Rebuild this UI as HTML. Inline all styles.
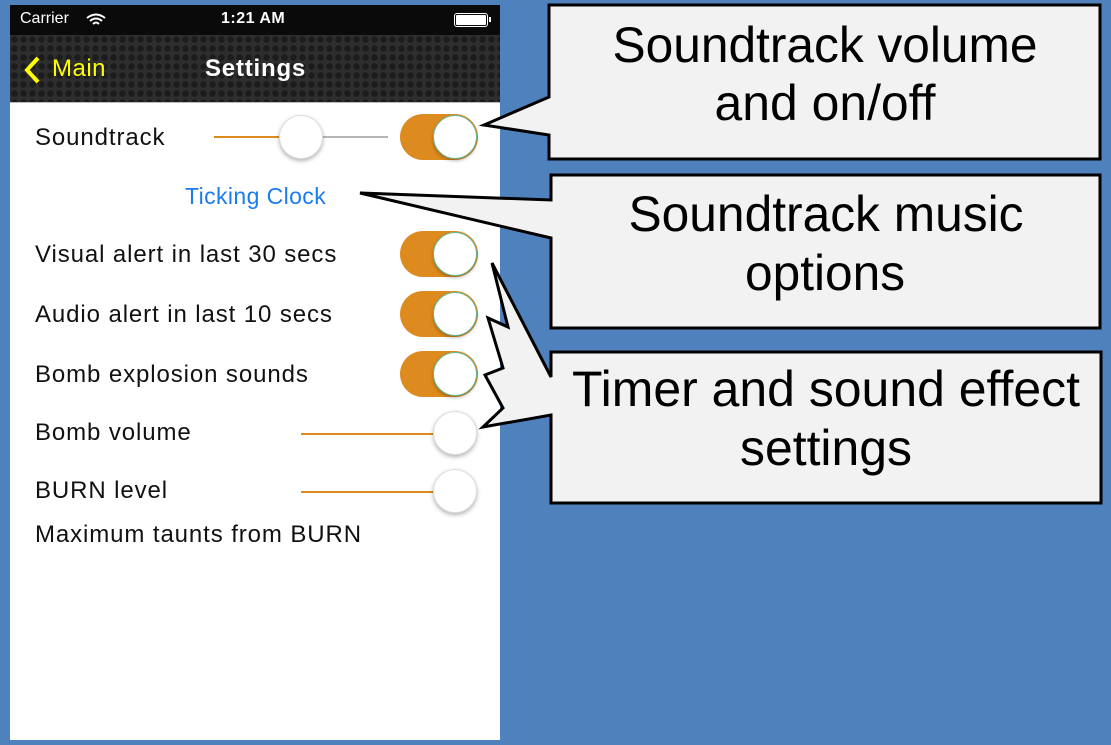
<!DOCTYPE html>
<html><head><meta charset="utf-8"><style>
body{margin:0;width:1111px;height:745px;background:#4f81bd;position:relative;overflow:hidden;font-family:"Liberation Sans",sans-serif}
.ph{position:absolute;left:10px;top:5px;width:490px;height:735px;background:#fff}
.sb{position:absolute;left:0;top:0;width:490px;height:30px;background:#0a0a0a;color:#fff;font-size:16px}
.nav{position:absolute;left:0;top:30px;width:490px;height:67px;background-color:#2e2e2e;background-image:radial-gradient(circle,#1c1c1c 3px,transparent 3.5px);background-size:9px 9px;border-bottom:1px solid #bbb}
.a{position:absolute;white-space:nowrap}
.lbl{position:absolute;left:25px;font-size:24px;letter-spacing:0.9px;color:#111;white-space:nowrap}
.tg{position:absolute;left:390px;width:78px;height:46px;border-radius:23px;background:#dd8a1e}
.tg::after{content:"";position:absolute;right:1px;top:1px;width:42px;height:42px;border-radius:50%;background:#fff;border:1px solid #6b9;box-shadow:0 2px 3px rgba(0,0,0,.25)}
.th{position:absolute;width:42px;height:42px;border-radius:50%;background:#fff;box-shadow:0 2px 4px rgba(0,0,0,.3);border:1px solid #ddd}
.tr{position:absolute;height:2px}
</style></head><body>
<div class="ph">
 <div class="sb"><span class="a" style="left:10px;top:5px">Carrier</span>
  <svg class="a" style="left:76px;top:8px" width="20" height="14" viewBox="0 0 20 14"><path d="M1 5Q10-2 19 5M4 8Q10 3 16 8M7 11Q10 8 13 11" stroke="#fff" stroke-width="2" fill="none"/></svg>
  <span class="a" style="left:211px;top:5px;font-weight:bold;letter-spacing:0.5px">1:21 AM</span>
  <div class="a" style="left:444px;top:8px;width:32px;height:12px;border:1px solid #fff;border-radius:3px"><div style="margin:1px;height:10px;background:#fff;border-radius:1px"></div></div>
  <div class="a" style="left:479px;top:12px;width:2px;height:5px;background:#fff"></div>
 </div>
 <div class="nav">
  <svg class="a" style="left:12px;top:20px" width="20" height="30"><path d="M16 3L5 15L16 27" stroke="#ff0" stroke-width="4" fill="none"/></svg>
  <span class="a" style="left:42px;top:20px;font-size:24px;color:#ff0;letter-spacing:0.5px">Main</span>
  <span class="a" style="left:195px;top:20px;font-size:24px;color:#fff;font-weight:bold;letter-spacing:0.8px">Settings</span>
 </div>
 <div class="lbl" style="top:119px">Soundtrack</div>
 <div class="tr" style="left:204px;top:131px;width:88px;background:#dd8a1e"></div>
 <div class="tr" style="left:292px;top:131px;width:86px;background:#b5b5b5"></div>
 <div class="th" style="left:269px;top:110px"></div>
 <div class="tg" style="top:109px"></div>
 <div class="a" style="left:175px;top:178px;font-size:23px;letter-spacing:0.4px;color:#1a7cf0">Ticking Clock</div>
 <div class="lbl" style="top:236px">Visual alert in last 30 secs</div><div class="tg" style="top:226px"></div>
 <div class="lbl" style="top:296px">Audio alert in last 10 secs</div><div class="tg" style="top:286px"></div>
 <div class="lbl" style="top:356px">Bomb explosion sounds</div><div class="tg" style="top:346px"></div>
 <div class="lbl" style="top:414px">Bomb volume</div>
 <div class="tr" style="left:291px;top:428px;width:135px;background:#dd8a1e"></div><div class="th" style="left:423px;top:406px"></div>
 <div class="lbl" style="top:472px">BURN level</div>
 <div class="tr" style="left:291px;top:486px;width:135px;background:#dd8a1e"></div><div class="th" style="left:423px;top:464px"></div>
 <div class="lbl" style="top:516px">Maximum taunts from BURN</div>
</div>
<svg class="a" style="left:0;top:0" width="1111" height="745" font-family="Liberation Sans,sans-serif" font-size="50" text-anchor="middle">
 <g fill="#f2f2f2" stroke="#000" stroke-width="3">
  <polygon points="549,5 1100,5 1100,159 549,159 549,135 484,125 549,97"/>
  <polygon points="551,175 1100,175 1100,328 551,328 551,238 360,193 551,200"/>
  <polygon points="551,352 1101,352 1101,503 551,503 551,415 483,427 503,408 485,375 503,368 488,318 508,327 492,263 551,377"/>
 </g>
 <text x="825" y="62" textLength="425" lengthAdjust="spacingAndGlyphs">Soundtrack volume</text>
 <text x="825" y="120" textLength="221" lengthAdjust="spacingAndGlyphs">and on/off</text>
 <text x="826" y="231" textLength="395" lengthAdjust="spacingAndGlyphs">Soundtrack music</text>
 <text x="825" y="290" textLength="160" lengthAdjust="spacingAndGlyphs">options</text>
 <text x="826" y="406" textLength="508" lengthAdjust="spacingAndGlyphs">Timer and sound effect</text>
 <text x="826" y="465" textLength="172" lengthAdjust="spacingAndGlyphs">settings</text>
</svg>
</body></html>
